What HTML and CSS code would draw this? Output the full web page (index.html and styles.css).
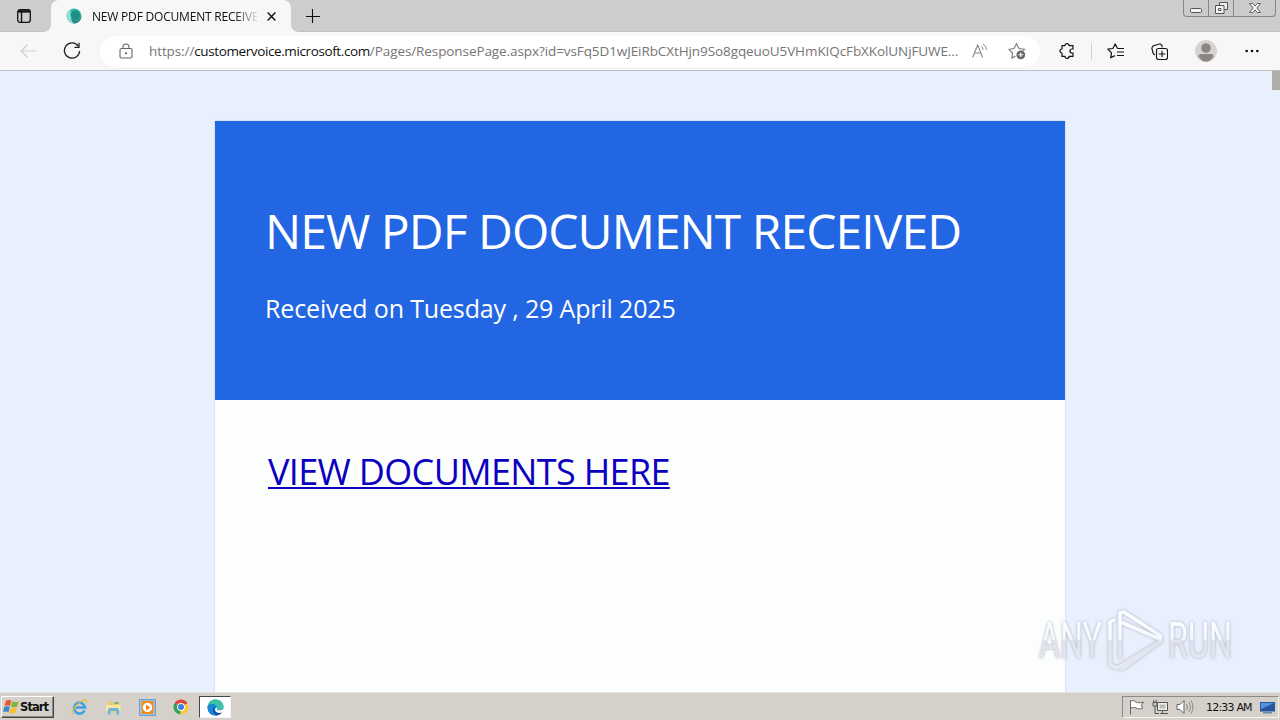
FILE: index.html
```html
<!DOCTYPE html>
<html lang="en">
<head>
    <meta charset="UTF-8">
    <meta name="viewport" content="width=device-width, initial-scale=1.0">
    <title>NEW PDF DOCUMENT RECEIVED</title>
    <link rel="stylesheet" href="styles.css">
</head>
<body>
    <!-- Tab strip -->
    <header class="tabbar">
        <svg class="tab-actions" width="14" height="14" viewBox="0 0 14 14">
            <rect x="0.7" y="0.7" width="12.6" height="12.6" rx="2.2" fill="none" stroke="#111" stroke-width="1.3"/>
            <path d="M1 2.6h12M4.5 3v10" stroke="#111" stroke-width="1.4"/>
            <path d="M1.5 1.2h11v2.3h-11z" fill="#111"/>
        </svg>
        <div class="tab">
            <svg width="16" height="16" viewBox="0 0 16 16">
                <circle cx="8" cy="8" r="7.5" fill="#2fb5a5"/>
                <path d="M0.5 8a7.5 7.5 0 0 1 5-7C3.5 5 4 10 8 15.5A7.5 7.5 0 0 1 .5 8z" fill="#8fe0d0"/>
                <path d="M8 15.5a7.5 7.5 0 0 0 7.5-7.5C13 12.500 8 13 5 10c.3 2.5 1.3 4.5 3 5.5z" fill="#2f8a86"/>
                <circle cx="9.5" cy="7" r="4.5" fill="#1d8f86"/>
            </svg>
            <span class="tab-title">NEW PDF DOCUMENT RECEIVED</span>
            <svg class="tab-close" width="9" height="9" viewBox="0 0 9 9">
                <path d="M0.6 0.6l7.8 7.8M8.4 0.6l-7.8 7.8" stroke="#111" stroke-width="1.4"/>
            </svg>
        </div>
        <svg class="new-tab" width="14" height="14" viewBox="0 0 14 14">
            <path d="M6.5 0v14M0 7.5h14" stroke="#111" stroke-width="1.1"/>
        </svg>
        <div class="window-buttons">
            <span class="win-btn min"><svg width="12" height="5" viewBox="0 0 12 5"><rect x=".5" y=".5" width="11" height="4" rx="1" fill="#f4f4f4" stroke="#555"/></svg></span>
            <span class="win-btn restore"><svg width="13" height="12" viewBox="0 0 13 12"><path d="M4.500 .5h8v7h-8z" fill="#eee" stroke="#555"/><path d="M.5 3.500h8.500v8H.5z" fill="#f4f4f4" stroke="#555"/><path d="M3.500 6.500h2.500v2H3.500z" fill="none" stroke="#555"/></svg></span>
            <span class="win-btn close"><svg width="12" height="10" viewBox="0 0 12 10"><path d="M.5.5h3.200L6 3 8.300.5h3.200L7.800 5l3.700 4.500H8.300L6 7 3.700 9.500H.5L4.200 5z" fill="#f4f4f4" stroke="#555" stroke-width=".9"/></svg></span>
        </div>
    </header>

    <!-- Address bar row -->
    <nav class="toolbar">
        <svg class="back" width="16" height="14" viewBox="0 0 16 14">
            <path d="M7.5 .7L1 7l6.5 6.3M1 7h15" fill="none" stroke="#cfcfcf" stroke-width="1.2"/>
        </svg>
        <svg class="reload" width="18" height="18" viewBox="0 0 18 18">
            <path d="M15.300 4.300A7.600 7.600 0 1 0 16.600 9" fill="none" stroke="#222" stroke-width="1.3"/>
            <path d="M16 .8v4.500h-4.500" fill="none" stroke="#222" stroke-width="1.3"/>
        </svg>
        <div class="omnibox">
            <svg class="lock" width="14" height="16" viewBox="0 0 14 16">
                <rect x="1" y="5.500" width="12" height="9.500" rx="1.500" fill="none" stroke="#666" stroke-width="1.1"/>
                <path d="M4 5.500V4a3 3 0 0 1 6 0v1.500" fill="none" stroke="#666" stroke-width="1.1"/>
                <circle cx="7" cy="10.200" r="1" fill="#555"/>
            </svg>
            <span class="url"><span class="scheme">https://</span><span class="host">customervoice.microsoft.com</span><span class="path">/Pages/ResponsePage.aspx?id=vsFq5D1wJEiRbCXtHjn9So8gqeuoU5VHmKIQcFbXKolUNjFUWE...</span></span>
            <svg class="read-aloud" width="16" height="16" viewBox="0 0 16 16">
                <path d="M.6 14.500L5.700 2l5 12.500M2.500 10h6.400" fill="none" stroke="#888" stroke-width="1.1"/>
                <path d="M9.300 3.200a4.500 4.500 0 0 1 1.700 3.600M11.200 1a7.500 7.500 0 0 1 3.300 6" fill="none" stroke="#888"/>
            </svg>
            <svg class="add-fav" width="18" height="18" viewBox="0 0 18 18">
                <path d="M7.500 14.200L3.800 16l.7-5L1 7.300l5-.8L8.500 1.700 11 6.500l5.500.8-1.800 1.500" fill="none" stroke="#777" stroke-width="1.1"/>
                <circle cx="12.800" cy="12.800" r="4.400" fill="#666"/>
                <path d="M12.800 10.400v4.800M10.400 12.800h4.800" stroke="#fff" stroke-width="1.1"/>
            </svg>
        </div>
        <svg class="puzzle" width="16" height="16" viewBox="0 0 16 16">
            <path d="M3 2.600h3a2 2 0 0 1 4 0h4V6h-1a1.900 1.900 0 0 0 0 4h1v3.400h-4a2 2 0 0 1-4 0H3V10a2 2 0 0 1 0-4z" fill="none" stroke="#111" stroke-width="1.2" stroke-linejoin="round"/>
        </svg>
        <span class="divider"></span>
        <svg class="favorites" width="18" height="16" viewBox="0 0 18 16">
            <path d="M10.500 5.400L8.200.9 5.900 5.500.9 6.200l3.600 3.600-.8 5L8 12.600" fill="none" stroke="#111" stroke-width="1.2" stroke-linejoin="round"/>
            <path d="M10.300 5.500H17M10 9h7M10 12.500h7" stroke="#111" stroke-width="1.2"/>
        </svg>
        <svg class="collections" width="17" height="17" viewBox="0 0 17 17">
            <path d="M3.800 12L2.200 10.500.8 5 2 3 9 .8l1.800 1.300.5 2.200" fill="none" stroke="#111" stroke-width="1.1"/>
            <rect x="5.500" y="5.500" width="11" height="11" rx="2" fill="none" stroke="#111" stroke-width="1.1"/>
            <path d="M11 7.700v6.600M7.700 11h6.600" stroke="#111" stroke-width="1.1"/>
        </svg>
        <svg class="avatar" width="22" height="22" viewBox="0 0 22 22">
            <circle cx="11" cy="11" r="11" fill="#d6d3d1"/>
            <circle cx="11" cy="8" r="4.800" fill="#8b8684"/>
            <path d="M3.500 16.500c0-1.500 1-2.500 2.500-2.500h10c1.500 0 2.500 1 2.500 2.500C17 19.500 14 21.700 11 21.700S5 19.500 3.500 16.500z" fill="#8b8684"/>
        </svg>
        <svg class="more" width="14" height="4" viewBox="0 0 14 4">
            <circle cx="1.700" cy="2" r="1.300" fill="#111"/><circle cx="7" cy="2" r="1.300" fill="#111"/><circle cx="12.300" cy="2" r="1.300" fill="#111"/>
        </svg>
    </nav>

    <!-- Page content -->
    <main class="viewport">
        <div class="form-card">
            <div class="form-head">
                <h1>NEW PDF DOCUMENT RECEIVED</h1>
                <p>Received on Tuesday , 29 April 2025</p>
            </div>
            <div class="form-body">
                <a class="doc-link" href="#">VIEW DOCUMENTS HERE</a>
            </div>
        </div>
        <div class="scroll-thumb"></div>
        <svg class="watermark" width="210" height="66" viewBox="0 0 210 66">
            <defs>
                <linearGradient id="fade" x1="0" y1="0" x2="0" y2="66" gradientUnits="userSpaceOnUse">
                    <stop offset=".2" stop-color="#fbfdff"/>
                    <stop offset=".49" stop-color="#f4f7fd"/>
                    <stop offset=".51" stop-color="#e0e3eb"/>
                    <stop offset=".9" stop-color="#e6e9f1"/>
                </linearGradient>
            </defs>
            <g fill="url(#fade)" class="wm-text">
                <text x="3" y="51" textLength="63" lengthAdjust="spacingAndGlyphs">ANY</text>
                <text x="132" y="51" textLength="64" lengthAdjust="spacingAndGlyphs">RUN</text>
            </g>
            <g fill="none" stroke="url(#fade)" stroke-width="3.6" stroke-linejoin="round" stroke-linecap="round">
                <path d="M78 13l-4 2v43l7 3 42-26"/>
                <path d="M84 50V6l4-1 37 24-1 3L87 16"/>
                <path d="M125 34L86 62"/>
            </g>
        </svg>
    </main>

    <!-- Taskbar -->
    <footer class="taskbar">
        <div class="start">
            <svg width="17" height="16" viewBox="0 0 17 16">
                <path d="M3 1.800C5 .5 6.800.8 8.300 1.800L7 7C5.500 6 3.500 6 1.600 7z" fill="#e8582a"/>
                <path d="M9.200 2.200c1.800 1 4 1.200 6.500 0l-1.500 5.200c-2 1-4.200 1-6.200 0z" fill="#7db83a"/>
                <path d="M1.300 8c2-1 3.900-1 5.500 0l-1.400 5.200c-1.500-1-3.500-1-5.400 0z" fill="#3c83d6"/>
                <path d="M7.700 8.500c2 1 4.200 1 6.200 0l-1.500 5.200c-2 1-4.200 1-6.200 0z" fill="#f7c22d"/>
            </svg>
            <span>Start</span>
        </div>
        <div class="quick">
            <svg width="17" height="17" viewBox="0 0 17 17">
                <path d="M13.500 11.500A5.500 5.500 0 1 1 14 8.500H4.500" fill="none" stroke="#3ba3e3" stroke-width="2.6"/>
                <path d="M2.500 15.500C-.5 14.500 2 9 7.500 4.500S16.500-.5 15.500 4" fill="none" stroke="#e9bd43" stroke-width="1.3"/>
            </svg>
            <svg width="17" height="17" viewBox="0 0 17 17">
                <path d="M2 2.500h5l1 1.500h6.500v9H2z" fill="#e9cd72"/>
                <path d="M1 6h14.500v6H1z" fill="#f8e6a3"/>
                <path d="M3 15.500V11q0-2 2-2h7q2 0 2 2v4.500h-2.500V12h-6v3.500z" fill="#69b5df"/>
                <path d="M9.500 4h4" stroke="#4ca355" stroke-width="1.4"/>
            </svg>
            <svg width="17" height="17" viewBox="0 0 17 17">
                <rect x=".7" y=".7" width="15.600" height="15.600" fill="#a9cfee" stroke="#5794c8"/>
                <rect x="2.500" y="2" width="12" height="13" fill="#f18a1d"/>
                <circle cx="8.500" cy="8.500" r="4.700" fill="#fff"/>
                <path d="M7 5.700l4.500 2.800L7 11.300z" fill="#ee7b12"/>
            </svg>
            <svg width="16" height="16" viewBox="0 0 16 16">
                <path d="M8 8L1.500 4.200A7.500 7.500 0 0 1 14.500 4.200z" fill="#de4636"/>
                <path d="M8 8L7.500 15.500A7.500 7.500 0 0 1 1.500 4.200z" fill="#2fa352"/>
                <path d="M8 8l6.500-3.800A7.500 7.500 0 0 1 7.500 15.500z" fill="#f9cb37"/>
                <circle cx="8" cy="8" r="3.900" fill="#fff"/><circle cx="8" cy="8" r="3" fill="#3e7ee2"/>
            </svg>
        </div>
        <div class="task-active">
            <svg width="17" height="17" viewBox="0 0 17 17">
                <circle cx="8.500" cy="8.500" r="8" fill="#1b7fd0"/>
                <path d="M.6 7.500C1.500 2.500 5 .5 8.500.5c5 0 8 3.500 8 6.500 0 2.500-2 4-4.500 4-2 0-2.500-.8-2-1.800C10.500 6.500 6 3.500 .6 7.500z" fill="#3cc3a5"/>
                <path d="M.6 7.500C3 4.500 7 4.500 9 6.500 5.500 7 5 12 10 16.300 4 17.500 0 13 .6 7.500z" fill="#1787dc"/>
                <path d="M7.300 8c-1 4 3 7 7.700 5-1.500 2.300-3.500 3.300-5.500 3.400C5.500 14 5 10 7.300 8z" fill="#124f9f"/>
                <path d="M10 8.500c.5 1-.5 1.500 0 2.200.8 1 4.500 1 6.200-1l.5 2.800c-3 2.500-8.200 1.500-8.700-1.500C8 9.500 9 8.500 10 8.500z" fill="#fff"/>
            </svg>
        </div>
        <div class="tray">
            <svg width="17" height="16" viewBox="0 0 17 16">
                <path d="M2.500 1v14.500M2.500 2c3-1 4 0 5.500 1s4 1.200 7.500 0l-2 3 1 3.500c-3 .8-5 .3-6.500-.5s-3-.8-5.500 0" fill="#fff" stroke="#666"/>
            </svg>
            <svg width="17" height="16" viewBox="0 0 17 16">
                <path d="M5.500 3.500h10v8h-10z" fill="#eee" stroke="#555"/><path d="M7.500 5.500h6v4h-6z" fill="#bbb"/>
                <path d="M8 14.500h8M10.500 12v2.500" stroke="#555"/>
                <path d="M1 3.500h4V7H1zM1.800 1v2.500M4.200 1v2.500M3 7v7.500h4" fill="none" stroke="#555"/>
            </svg>
            <svg width="18" height="16" viewBox="0 0 18 16">
                <path d="M1 5.500h3l4-4v13l-4-4H1z" fill="#fff" stroke="#666"/>
                <path d="M10.500 5q2 3 0 6M12.800 3q3.200 5 0 10M15 1.500q4 6.500 0 13" fill="none" stroke="#888"/>
            </svg>
            <span class="clock">12:33 AM</span>
            <svg width="15" height="13" viewBox="0 0 15 13">
                <path d="M0 1h15v9.500H0z" fill="#27569f"/><path d="M1 2h13L1 8z" fill="#5295dd"/><path d="M3 11h9v1.500H3z" fill="#6e86a8"/>
            </svg>
        </div>
    </footer>
</body>
</html>
```

FILE: styles.css
```css
* {
    box-sizing: border-box;
}

body {
    margin: 0;
    width: 1280px;
    height: 720px;
    overflow: hidden;
    display: flex;
    flex-direction: column;
    font-family: "Open Sans", "Noto Sans", sans-serif;
}

svg {
    display: block;
    flex-shrink: 0;
}

/* Tab strip */
.tabbar {
    height: 32px;
    display: flex;
    align-items: center;
    background-color: #cdcdcd;
    border-bottom: 1px solid #c2c2c2;
}

.tab-actions {
    margin-left: 17px;
}

.tab {
    position: relative;
    width: 240px;
    height: 32px;
    margin-left: 20px;
    padding: 0 15px;
    display: flex;
    align-items: center;
    background-color: #f7f7f7;
    border-radius: 8px 8px 0 0;
    align-self: flex-start;
}

/* curved feet of the active tab */
.tab::before,
.tab::after {
    content: "";
    position: absolute;
    bottom: 0;
    width: 7px;
    height: 7px;
}

.tab::before {
    left: -7px;
    background: radial-gradient(circle at 0 0, #cdcdcd 6.5px, #f7f7f7 7px);
}

.tab::after {
    right: -7px;
    background: radial-gradient(circle at 100% 0, #cdcdcd 6.5px, #f7f7f7 7px);
}

.tab-title {
    width: 165px;
    margin-left: 10px;
    overflow: hidden;
    white-space: nowrap;
    font-size: 12px;
    letter-spacing: -0.2px;
    color: #111;
    -webkit-mask-image: linear-gradient(to right, #000 142px, transparent 168px);
    mask-image: linear-gradient(to right, #000 142px, transparent 168px);
}

.tab-close {
    margin-left: 10px;
}

.new-tab {
    margin-left: 15px;
}

.window-buttons {
    display: flex;
    align-self: flex-start;
    width: 93px;
    height: 17px;
    margin-left: auto;
    margin-right: 4px;
    border: 1px solid #858585;
    border-top: none;
    border-radius: 0 0 4px 4px;
    background-color: #cbcbcb;
}

.win-btn {
    display: flex;
    align-items: center;
    justify-content: center;
    width: 25px;
    border-right: 1px solid #858585;
}

.win-btn.min {
    padding-top: 4px;
}

.win-btn.close {
    flex: 1;
    border-right: none;
}

/* Address bar row */
.toolbar {
    height: 39px;
    display: flex;
    align-items: center;
    background-color: #f7f7f7;
    border-bottom: 1px solid #bcbfc4;
}

.back {
    margin-left: 20px;
}

.reload {
    margin-left: 27px;
}

.omnibox {
    width: 940px;
    height: 31px;
    margin-left: 19px;
    padding-left: 19px;
    display: flex;
    align-items: center;
    background-color: #fff;
    border-radius: 16px;
}

.url {
    width: 815px;
    margin-left: 16px;
    white-space: nowrap;
    font-size: 13.5px;
    line-height: 20px;
    color: #757575;
}

.scheme {
    letter-spacing: -0.1px;
}

.host {
    letter-spacing: -0.39px;
    color: #111;
}

.path {
    letter-spacing: -0.09px;
}

.read-aloud {
    margin-left: 8px;
}

.add-fav {
    margin-left: 20px;
}

.puzzle {
    margin-left: 19px;
}

.divider {
    width: 1px;
    height: 17px;
    margin-left: 16px;
    background-color: #d2d2d2;
}

.favorites {
    margin-left: 15px;
}

.collections {
    margin-left: 26px;
}

.avatar {
    margin-left: 27px;
}

.more {
    margin-left: 28px;
}

/* Page content */
.viewport {
    position: relative;
    height: 621px;
    padding-top: 50px;
    overflow: hidden;
    background-color: #e8effd;
}

.form-card {
    width: 850px;
    height: 580px;
    margin: 0 auto;
    background-color: #fcfefe;
    box-shadow: 0 0 2px #bcd4ea;
}

.form-head {
    height: 279px;
    padding: 77px 50px 0;
    background-color: #2266e3;
    color: #fff;
}

.form-head h1 {
    margin: 0;
    font-size: 48px;
    font-weight: 400;
    line-height: 66px;
    letter-spacing: -0.94px;
    white-space: nowrap;
}

.form-head p {
    margin: 26px 0 0;
    font-size: 25px;
    line-height: 36px;
    letter-spacing: -0.15px;
    white-space: nowrap;
}

.form-body {
    padding: 47px 53px;
}

.doc-link {
    font-size: 36px;
    line-height: 50px;
    letter-spacing: -0.66px;
    white-space: nowrap;
    color: #0c00c0;
    text-decoration-thickness: 2px;
    text-underline-offset: 2px;
    text-decoration-skip-ink: none;
}

.scroll-thumb {
    position: absolute;
    top: 0;
    right: 0;
    width: 8px;
    height: 19px;
    background-color: #b1adab;
}

.watermark {
    position: absolute;
    left: 1036px;
    top: 536px;
    filter: drop-shadow(0 0 1.5px #a9afbd);
}

.wm-text {
    font-family: "Roboto", sans-serif;
    font-size: 50px;
}

/* Taskbar */
.taskbar {
    height: 28px;
    padding-top: 1px;
    display: flex;
    align-items: center;
    background-color: #d5d1ca;
    border-top: 1px solid #e8e6e1;
}

.start {
    display: flex;
    align-items: center;
    width: 53px;
    height: 22px;
    margin-left: 1px;
    padding-left: 1px;
    border: 1px solid;
    border-color: #fff #444 #444 #fff;
    box-shadow: inset -1px -1px #8c8983;
    font-family: "DejaVu Sans", sans-serif;
    font-size: 11.5px;
    font-weight: 700;
    letter-spacing: -0.9px;
    color: #111;
}

.quick {
    display: flex;
    align-items: center;
    gap: 17px;
    margin-left: 17px;
}

.task-active {
    display: flex;
    align-items: center;
    justify-content: center;
    width: 32px;
    height: 22px;
    margin-left: 10px;
    background-color: #fff;
    border: 1px solid;
    border-color: #444 #f5f5f5 #f5f5f5 #444;
}

.tray {
    display: flex;
    align-items: center;
    gap: 7px;
    width: 157px;
    height: 22px;
    margin-left: auto;
    margin-right: 1px;
    padding-left: 5px;
    border: 1px solid;
    border-color: #8d8a85 #f5f4f1 #f5f4f1 #8d8a85;
}

.clock {
    width: 47px;
    margin-left: 5px;
    font-family: "DejaVu Sans", sans-serif;
    font-size: 11px;
    letter-spacing: -0.8px;
    white-space: nowrap;
    color: #111;
}
```
